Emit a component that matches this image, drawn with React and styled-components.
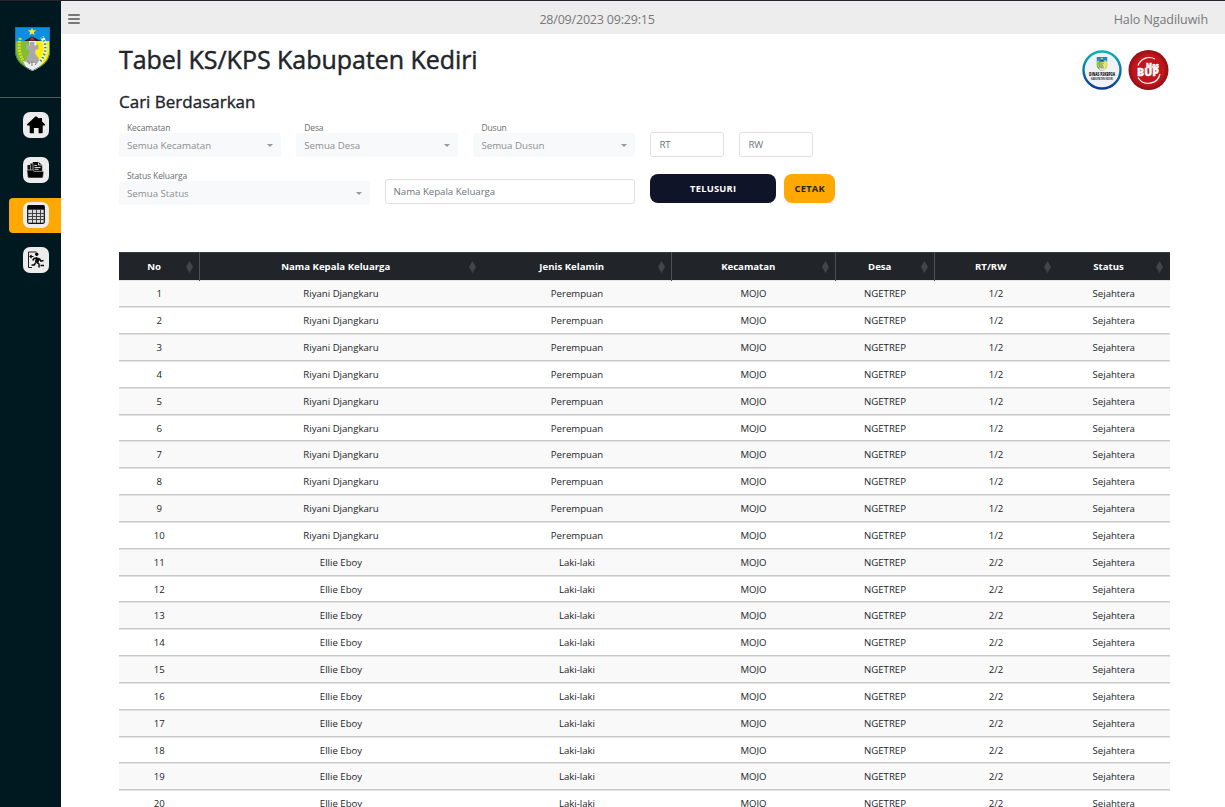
import React from "react";
import styled, { createGlobalStyle } from "styled-components";

const Global = createGlobalStyle`
  * { box-sizing: border-box; }
  body {
    margin: 0;
    background: #fff;
    color: #212529;
    font-family: "Open Sans", "Noto Sans", sans-serif;
    overflow: hidden;
  }
`;

const Page = styled.div`
  display: flex;
  height: 807px;
  overflow: hidden;
  border-top: 1px solid #26242b;
`;

const Sidebar = styled.aside`
  width: 61px;
  flex: none;
  background: #001820;
`;

const Brand = styled.div`
  height: 97px;
  padding: 26px 0 0 15px;
  border-bottom: 1px solid #4c5b60;
`;

const Nav = styled.nav`
  display: flex;
  flex-direction: column;
  gap: 10px;
  padding: 9.5px 0 0 9px;
`;

const NavItem = styled.a`
  height: 35px;
  padding: 4.5px 0 0 13.5px;
  border-radius: 4px 0 0 4px;
  background: ${(p) => (p.$active ? "#ffa800" : "transparent")};
`;

const Tile = styled.span`
  display: grid;
  place-items: center;
  width: 26px;
  height: 25.5px;
  border-radius: 7px;
  background: #ececec;
`;

const Main = styled.div`
  flex: 1;
  min-width: 0;
`;

const Topbar = styled.header`
  display: grid;
  grid-template-columns: 1fr auto 1fr;
  align-items: center;
  height: 33px;
  padding: 3px 17px 0 7px;
  background: #ededed;
  color: #77787a;
  font-size: 12.5px;
`;

const Burger = styled.span`
  display: grid;
  gap: 2px;
  width: 12px;
  i { height: 2px; background: #777; border-radius: 1px; }
`;

const Clock = styled.span`
  letter-spacing: -0.2px;
  transform: translateX(-41px);
`;

const Greeting = styled.span`
  justify-self: end;
  letter-spacing: -0.07px;
`;

const Content = styled.main`
  padding: 0 55px 0 58px;
`;

const Heading = styled.div`
  display: flex;
  justify-content: space-between;
  height: 52px;
`;

const Title = styled.h2`
  margin: 8px 0 0;
  font-size: 25px;
  line-height: 34px;
  font-weight: 400;
  -webkit-text-stroke: 0.45px #212529;
  letter-spacing: -0.04px;
  white-space: nowrap;
`;

const Logos = styled.div`
  display: flex;
  gap: 6px;
  padding: 16px 1.5px 0 0;
`;

const Subtitle = styled.h3`
  margin: 4px 0 0;
  font-size: 17px;
  line-height: 24px;
  font-weight: 400;
  -webkit-text-stroke: 0.35px #212529;
  letter-spacing: 0;
`;

const FilterRow = styled.div`
  display: flex;
  gap: 15px;
  height: 48px;
`;

const Field = styled.label`
  display: block;
  width: ${(p) => p.$w}px;
  padding-top: 7px;
`;

const FieldLabel = styled.span`
  display: block;
  height: 12px;
  padding-left: 8px;
  font-size: 8.5px;
  line-height: 13px;
  color: #6a6c6e;
  letter-spacing: -0.12px;
`;

const SelectBox = styled.span`
  display: flex;
  align-items: center;
  justify-content: space-between;
  height: 24.4px;
  padding: 0 8px;
  border-radius: 3px;
  background: #f8f9fa;
  color: #8d8e90;
  font-size: 9.7px;
`;

const Caret = styled.i`
  border: 3px solid transparent;
  border-top-color: #999;
  border-bottom: 0;
`;

const Input = styled.input`
  width: ${(p) => p.$w}px;
  height: 25px;
  margin-top: ${(p) => p.$top}px;
  padding: 0 8px;
  border: 1px solid #dee0e4;
  border-radius: 3px;
  font: 9.7px "Open Sans", sans-serif;
  letter-spacing: -0.04px;
  &::placeholder { color: #6c757d; opacity: 1; }
`;

const Actions = styled.div`
  display: flex;
  align-items: flex-start;
  gap: 8px;
  padding-top: 12px;
`;

const Button = styled.button`
  width: ${(p) => p.$w}px;
  height: 29px;
  padding: 0;
  border: 0;
  border-radius: 8px;
  background: ${(p) => p.$bg};
  color: ${(p) => p.$fg};
  font: 700 9.3px "Open Sans", sans-serif;
  letter-spacing: 0.25px;
`;

const Table = styled.div`
  margin-top: 42.45px;
  font-size: 9.6px;
`;

const Row = styled.div`
  display: grid;
  grid-template-columns: 80.5px 283px 189px 164px 99px 123px 1fr;
  height: 26.84px;
  text-align: center;
  line-height: 26.9px;
  background: ${(p) => (p.$odd ? "#f9f9f9" : "#fff")};
  border-bottom: 1px solid #c9c9c9;
  box-shadow: inset 0 1px #e2e2e2;
`;

const HeadRow = styled(Row)`
  height: 28px;
  background: #212529;
  border-bottom: 0;
  box-shadow: inset 0 1px #373b3e;
  color: #fff;
  font-weight: 700;
  line-height: 29px;
`;

const HeadCell = styled.div`
  display: flex;
  align-items: center;
  border-right: ${(p) => (p.$line ? "1px solid #4d5154" : "0")};
  padding-right: ${(p) => (p.$line ? 6 : 7)}px;
  span { flex: 1; padding-left: 3.5px; white-space: nowrap; }
`;

const Cell = styled.div`
  padding-top: 1px;
  white-space: nowrap;
`;

const Sort = () => (
  <svg width="7" height="12" viewBox="0 0 7 12">
    <path d="M3.500 0 7 5.900H0ZM0 6.100h7L3.500 12Z" fill="#42464a" />
  </svg>
);

const Shield = ({ w, h }) => (
  <svg width={w} height={h} viewBox="0 0 35 44">
    <defs>
      <clipPath id={`shield${w}`}>
        <path d="M0 0h35v24c0 10-8 16-17.500 20C8 40 0 34 0 24Z" />
      </clipPath>
    </defs>
    <g clipPath={`url(#shield${w})`}>
      <path d="M0 0h35v14H0Z" fill="#0b8fe0" />
      <path d="M0 14h14v30H0Z" fill="#83bf2c" />
      <path d="M14 14h7v30h-7Z" fill="#f6f6ee" />
      <path d="M21 14h14v30H21Z" fill="#fff200" />
      <path d="M9 14l8-4.500 9 4.500Z" fill="#222" />
      <path d="M14.500 13.500l2.500-4 3 4Z" fill="#c92027" />
      <path d="M17 .6l1 2.700h3.200l-2.400 1.900.9 2.900-2.700-1.700-2.700 1.700.9-2.900-2.400-1.900h3.200Z" fill="#ffe52c" />
      <path d="M5.500 11c-2.500 7-1.500 16 2.500 22" fill="none" stroke="#d6dc26" strokeWidth="3" strokeDasharray="2 1" />
      <path d="M27 10c5 8 5 18-4 27" fill="none" stroke="#fff" strokeWidth="3.500" />
      <path d="M27 10c5 8 5 18-4 27" fill="none" stroke="#2f9d48" strokeWidth="2.500" strokeDasharray="1.500 2" />
      <path d="M14.500 15h5v4l4-2v5l-3 1v4l3 4 .5 3-2 2H12l-1.500-2 1-3 2.500-4v-4l-3-1v-5l3.500 2Z" fill="#aaa7a8" />
      <path d="M8 34l5 1 4.500 3 5.500-3h5l-4 5-6.500 4-6.500-4Z" fill="#eee" />
      <path d="M12 34l3 3m2-3v5m5-4-2 3" stroke="#8e8c8c" strokeWidth="1.200" />
    </g>
    <path d="M.5.500h34v23.500c0 9.500-8 15.500-17 19.500C8 39.500.5 33.500.5 24Z" fill="none" stroke="#246884" strokeOpacity=".7" />
  </svg>
);

const HomeIcon = () => (
  <svg width="20" height="18" viewBox="0 0 20 18">
    <path d="M9.400.6c.4-.3.800-.3 1.200 0l2.500 2.200V2H16v3.400l2.700 2.500c.8.800.3 1.700-.7 1.700h-1.300v6.800c0 .5-.3.800-.8.800h-3.300v-5.200H7.900v5.200H4.500c-.5 0-.8-.3-.8-.8V9.600H2c-1 0-1.400-.9-.6-1.600Z" fill="#000" />
  </svg>
);

const FolderIcon = () => (
  <svg width="19" height="18" viewBox="0 0 19 18">
    <path d="M1.500 15V4h2.800V2.500h2.500V1h5.800l3.600 3v6h.6v6H2Z" fill="#111" />
    <path d="M4.500 3.500V9.500M7 2.500V9.500" stroke="#aaa" strokeWidth=".8" />
    <path d="M8.500 4.500H11M8.500 6.500h6M8.500 8.300h4M12.500 1.500V4H16" fill="none" stroke="#e4e4e4" strokeWidth=".9" />
    <path d="M.8 9h5.700l1.700 1.400h9.700L16.800 17H2Z" fill="#000" stroke="#e4e4e4" strokeWidth=".6" />
  </svg>
);

const TableIcon = () => (
  <svg width="18" height="19" viewBox="0 0 18 19">
    <rect x=".7" y=".7" width="16.600" height="17.600" rx="1.200" fill="#dcdcdc" stroke="#111" strokeWidth="1.200" />
    <path d="M.7.700h16.600v4H.7Z" fill="#05080d" />
    <path d="M1 8.500h16M1 11.500h16M1 14.500h16M5.500 4v14M9.500 4v14M13.500 4v14" stroke="#333" strokeWidth=".9" />
  </svg>
);

const ExitIcon = () => (
  <svg width="18" height="18" viewBox="0 0 18 18" fill="none" stroke="#0a0a0a">
    <path d="M9.500 1h-8v15.500H5" strokeWidth=".9" />
    <path d="M6.500 5.500H3M4.500 4 3 5.500 4.500 7" strokeWidth="1.100" />
    <circle cx="9.700" cy="3.300" r="1.700" fill="#0a0a0a" stroke="none" />
    <path d="M9.500 6.800l3 1-2 4.200-2-1Z" fill="#0a0a0a" strokeWidth="1.200" />
    <path d="M10 7 7 7.500 5.700 9.500M12.500 8l1.500 2.200 2.500-.7M9.500 11l2.500 2v3.500M8.500 12l-1.200 2H4.500M13.500 14.500H17" strokeWidth="1.500" />
  </svg>
);

const DinasLogo = () => (
  <svg width="40" height="40" viewBox="0 0 40 40">
    <defs>
      <linearGradient id="ring" x2="0" y2="1">
        <stop stopColor="#08b3b1" />
        <stop offset="1" stopColor="#0b3a96" />
      </linearGradient>
    </defs>
    <circle cx="20" cy="20" r="18.500" fill="#f1f1f7" stroke="url(#ring)" strokeWidth="2.400" />
    <g transform="translate(14.500 7)"><Shield w={11} h={14} /></g>
    <text x="20" y="26.300" textAnchor="middle" fontSize="4.600" fontWeight="800" textLength="26" lengthAdjust="spacingAndGlyphs" fill="#222">DINAS P3KBP3A</text>
    <text x="20" y="29.500" textAnchor="middle" fontSize="2.700" fontWeight="700" textLength="22" lengthAdjust="spacingAndGlyphs" fill="#333">KABUPATEN KEDIRI</text>
  </svg>
);

const MasBupLogo = () => (
  <svg width="41" height="41" viewBox="0 0 41 41">
    <defs>
      <radialGradient id="red">
        <stop offset=".75" stopColor="#c2151b" />
        <stop offset="1" stopColor="#8e1014" />
      </radialGradient>
    </defs>
    <circle cx="20.500" cy="20" r="20" fill="url(#red)" />
    <path d="M10 15.500a12 12 0 0 1 17-6.500M32 24a12 12 0 0 1-22 3.500" fill="none" stroke="#fff" strokeWidth="1.200" />
    <g fill="#fff" fontWeight="800" stroke="#fff" strokeWidth=".3">
      <text x="18" y="17.500" fontSize="7" textLength="13" lengthAdjust="spacingAndGlyphs">Mas</text>
      <text x="9" y="26" fontSize="10" textLength="22" lengthAdjust="spacingAndGlyphs">BUP</text>
    </g>
  </svg>
);

const columns = ["No", "Nama Kepala Keluarga", "Jenis Kelamin", "Kecamatan", "Desa", "RT/RW", "Status"];
const ruled = [0, 2, 3, 4];
const people = Array.from({ length: 20 }, (_, i) =>
  i < 10
    ? [i + 1, "Riyani Djangkaru", "Perempuan", "MOJO", "NGETREP", "1/2", "Sejahtera"]
    : [i + 1, "Ellie Eboy", "Laki-laki", "MOJO", "NGETREP", "2/2", "Sejahtera"]
);

const Select = ({ w, label, value }) => (
  <Field $w={w}>
    <FieldLabel>{label}</FieldLabel>
    <SelectBox>{value}<Caret /></SelectBox>
  </Field>
);

export default function App() {
  const icons = [HomeIcon, FolderIcon, TableIcon, ExitIcon];
  return (
    <Page>
      <Global />
      <Sidebar>
        <Brand><Shield w={35} h={44} /></Brand>
        <Nav>
          {icons.map((Icon, i) => (
            <NavItem key={i} $active={i === 2}><Tile><Icon /></Tile></NavItem>
          ))}
        </Nav>
      </Sidebar>
      <Main>
        <Topbar>
          <Burger><i /><i /><i /></Burger>
          <Clock>28/09/2023 09:29:15</Clock>
          <Greeting>Halo Ngadiluwih</Greeting>
        </Topbar>
        <Content>
          <Heading>
            <Title>Tabel KS/KPS Kabupaten Kediri</Title>
            <Logos><DinasLogo /><MasBupLogo /></Logos>
          </Heading>
          <Subtitle>Cari Berdasarkan</Subtitle>
          <FilterRow>
            <Select w={162.2} label="Kecamatan" value="Semua Kecamatan" />
            <Select w={162.2} label="Desa" value="Semua Desa" />
            <Select w={162} label="Dusun" value="Semua Dusun" />
            <Input $w={74} $top={18} placeholder="RT" />
            <Input $w={74} $top={18} placeholder="RW" />
          </FilterRow>
          <FilterRow>
            <Select w={250.6} label="Status Keluarga" value="Semua Status" />
            <Input $w={250.6} $top={17} placeholder="Nama Kepala Keluarga" />
            <Actions>
              <Button $w={126} $bg="#101428" $fg="#fff">TELUSURI</Button>
              <Button $w={51} $bg="#ffa800" $fg="#212529">CETAK</Button>
            </Actions>
          </FilterRow>
          <Table>
            <HeadRow>
              {columns.map((c, i) => (
                <HeadCell key={c} $line={ruled.includes(i)}><span>{c}</span><Sort /></HeadCell>
              ))}
            </HeadRow>
            {people.map((person, r) => (
              <Row key={r} $odd={r % 2 === 0}>
                {person.map((v, i) => <Cell key={i}>{v}</Cell>)}
              </Row>
            ))}
          </Table>
        </Content>
      </Main>
    </Page>
  );
}
